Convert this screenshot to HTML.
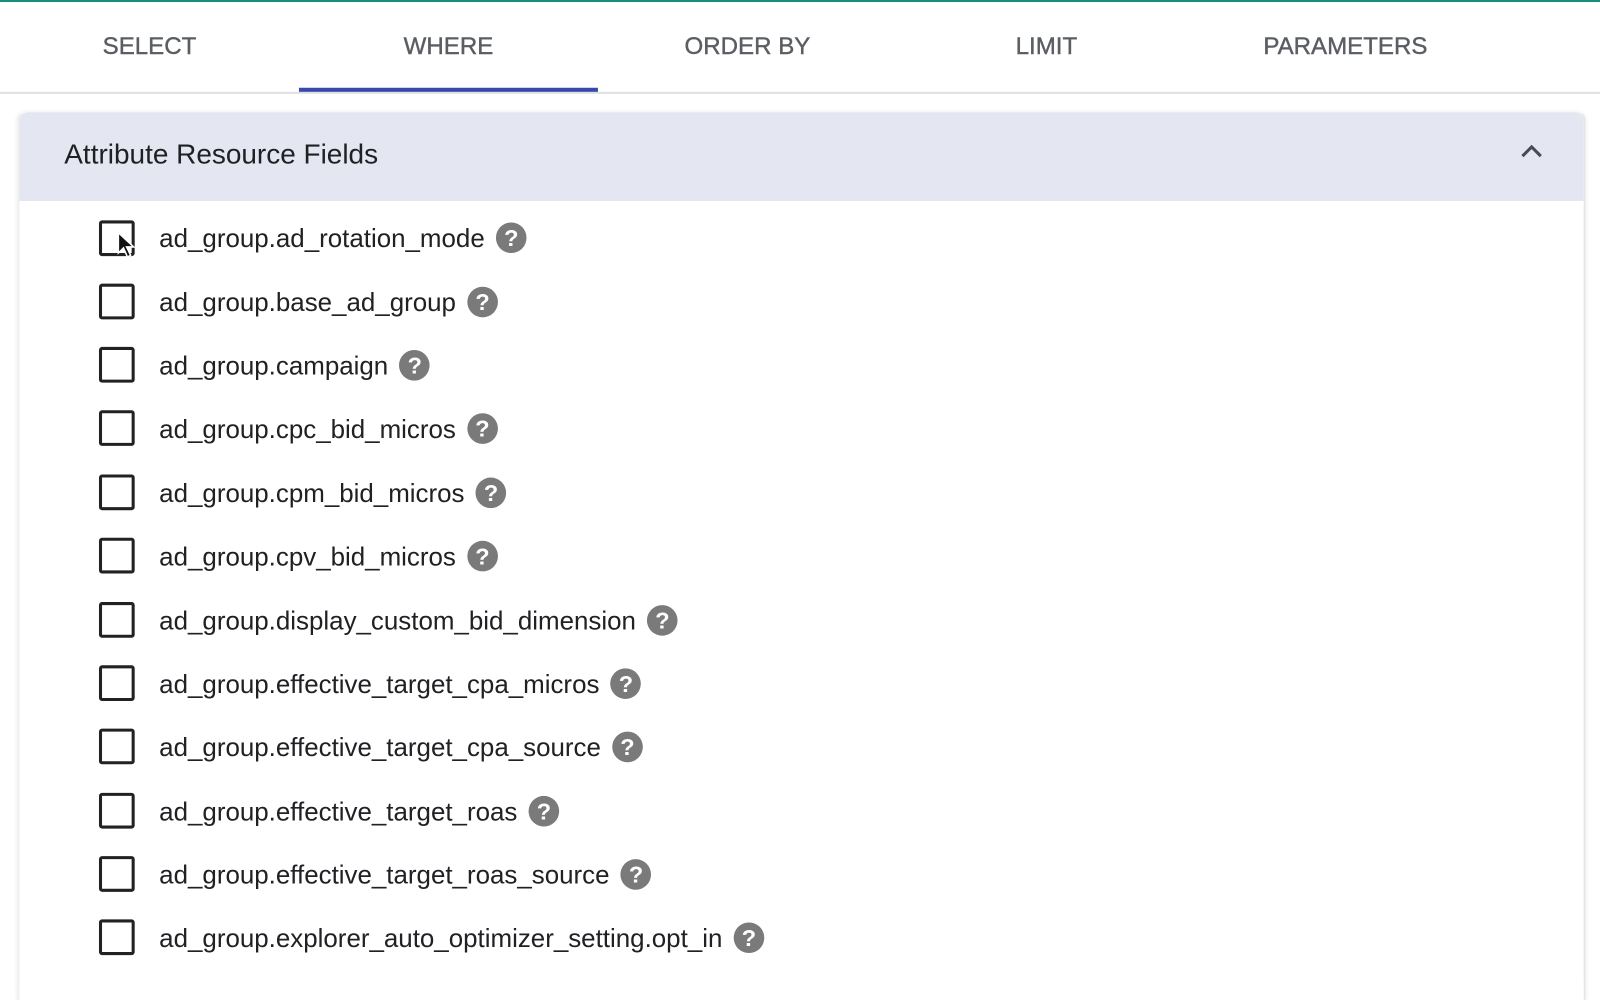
<!DOCTYPE html>
<html><head><style>
body{margin:0;width:1600px;height:969px;overflow:hidden;background:#fff;font-family:"Liberation Sans",Arial,sans-serif;position:relative}
#w{position:absolute;left:0;top:0;width:1568px;height:950px;transform:scale(1.0204);transform-origin:0 0}
.top{position:absolute;left:0;top:0;width:1568px;height:2px;background:#1b8b7c}
.tab{position:absolute;top:30px;width:293px;text-align:center;font-size:23.6px;color:#5a5e63;line-height:32px;-webkit-text-stroke:0.4px #5a5e63}
.ul{position:absolute;left:293px;top:86px;width:293px;height:4px;background:#3949ab}
.div{position:absolute;left:0;top:90px;width:1568px;height:2px;background:#e0e0e0}
.panel{position:absolute;left:17px;top:110px;width:1533px;height:870px;border-right:2px solid #e6e6e6;border-left:2px solid #eee;box-shadow:0 0 4px rgba(0,0,0,.08);border-radius:8px 8px 0 0}
.hdr{position:absolute;left:0;top:0;right:0;height:87px;background:#e4e6f2;border-radius:8px 8px 0 0}
.hdr span{position:absolute;left:44px;top:25px;font-size:27.4px;color:#202124}
.cb{position:absolute;left:97px;width:29px;height:29px;border:3px solid #222;border-radius:3px}
.t{position:absolute;left:156px;font-size:25.4px;color:#202124;white-space:nowrap;line-height:30px}
.q{display:inline-block;width:30px;height:30px;border-radius:50%;background:#7a7a7a;color:#fff;font-size:23px;font-weight:bold;text-align:center;line-height:30px;margin-left:11px;vertical-align:middle;position:relative;top:-2px}
</style></head><body><div id="w">
<div class="top"></div>
<div class="tab" style="left:0">SELECT</div>
<div class="tab" style="left:293px">WHERE</div>
<div class="tab" style="left:586px">ORDER BY</div>
<div class="tab" style="left:879px">LIMIT</div>
<div class="tab" style="left:1172px">PARAMETERS</div>
<div class="div"></div>
<div class="ul"></div>
<div class="panel"><div class="hdr"><span>Attribute Resource Fields</span>
<svg style="position:absolute;left:1470px;top:30px" width="24" height="16" viewBox="0 0 24 16"><path d="M3 13 L12 4 L21 13" fill="none" stroke="#4a4a55" stroke-width="3"/></svg></div></div>
<div class="cb" style="top:216px"></div><div class="t" style="top:219px">ad_group.ad_rotation_mode<span class="q">?</span></div>
<div class="cb" style="top:278px"></div><div class="t" style="top:282px">ad_group.base_ad_group<span class="q">?</span></div>
<div class="cb" style="top:340px"></div><div class="t" style="top:344px">ad_group.campaign<span class="q">?</span></div>
<div class="cb" style="top:402px"></div><div class="t" style="top:406px">ad_group.cpc_bid_micros<span class="q">?</span></div>
<div class="cb" style="top:465px"></div><div class="t" style="top:469px">ad_group.cpm_bid_micros<span class="q">?</span></div>
<div class="cb" style="top:527px"></div><div class="t" style="top:531px">ad_group.cpv_bid_micros<span class="q">?</span></div>
<div class="cb" style="top:590px"></div><div class="t" style="top:594px">ad_group.display_custom_bid_dimension<span class="q">?</span></div>
<div class="cb" style="top:652px"></div><div class="t" style="top:656px">ad_group.effective_target_cpa_micros<span class="q">?</span></div>
<div class="cb" style="top:714px"></div><div class="t" style="top:718px">ad_group.effective_target_cpa_source<span class="q">?</span></div>
<div class="cb" style="top:777px"></div><div class="t" style="top:781px">ad_group.effective_target_roas<span class="q">?</span></div>
<div class="cb" style="top:839px"></div><div class="t" style="top:843px">ad_group.effective_target_roas_source<span class="q">?</span></div>
<div class="cb" style="top:901px"></div><div class="t" style="top:905px">ad_group.explorer_auto_optimizer_setting.opt_in<span class="q">?</span></div>
<svg style="position:absolute;left:114px;top:226px" width="20" height="30" viewBox="0 0 20 30"><path d="M2 2 L2 22 L7 17 L11 26 L14 24 L10 16 L17 16 Z" fill="#111" stroke="#fff" stroke-width="1.5"/></svg>
</div></body></html>
